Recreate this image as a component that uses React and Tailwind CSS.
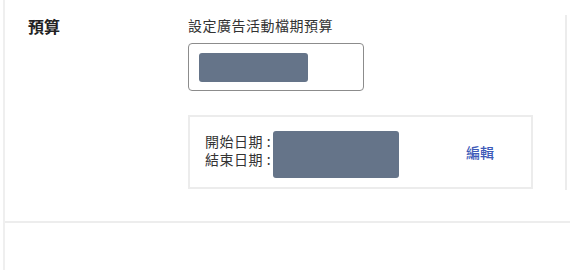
import React from 'react';

const font = { fontFamily: '"Noto Sans CJK TC", "Noto Sans", sans-serif' };

const Redacted = ({ className }) => (
  <div className={`bg-[#657489] rounded-[3px] ${className}`}></div>
);

const App = () => {
  return (
    <div className="w-[570px] h-[270px] bg-white overflow-hidden" style={font}>
      <div className="ml-[3px] h-full border-l-2 border-[#efefef] flex flex-col">
        <div className="h-[223px] border-b-2 border-[#ededed] flex">
          <div className="w-[183px] pl-[23px] pt-[16px]">
            <h2 className="text-[16px] leading-[20px] font-bold text-[#222]">預算</h2>
          </div>

          <div className="w-[345px] pt-[15px]">
            <p className="text-[14px] leading-[20px] tracking-[0.5px] text-[#333]">
              設定廣告活動檔期預算
            </p>

            <div className="mt-[8px] w-[176px] h-[48px] border border-[#8c8c8c] rounded-[4px] px-[10px] py-[9px]">
              <Redacted className="w-[109px] h-[29px]" />
            </div>

            <div className="mt-[24px] h-[74px] border-2 border-[#ececec] flex items-center pl-[15px]">
              <div className="text-[14px] leading-[18px] tracking-[0.5px] text-[#333] -mt-[5px]">
                <div>開始日期 :</div>
                <div>結束日期 :</div>
              </div>
              <Redacted className="w-[126px] h-[47px] ml-[2px] mt-[4px]" />
              <button className="ml-auto mr-[37px] text-[14px] font-medium text-[#3d5ab8]">
                編輯
              </button>
            </div>
          </div>

          <div className="ml-auto mr-[3px] mt-[15px] w-[2px] h-[175px] bg-[#ececec]"></div>
        </div>
      </div>
    </div>
  );
};

export default App;
